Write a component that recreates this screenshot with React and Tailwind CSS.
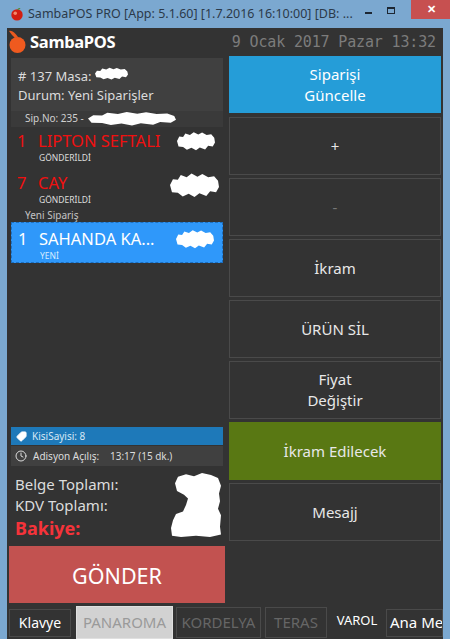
import { Clock, Tag } from 'lucide-react'

const font = { fontFamily: '"Noto Sans", sans-serif' }

// white scribbles covering numbers in the screenshot
const Blob = ({ className, d }) => (
  <svg className={`absolute ${className}`} viewBox="0 0 100 100" preserveAspectRatio="none">
    <path d={d} fill="#fff" />
  </svg>
)

const blobWide = 'M0 50 L6 28 L16 30 L22 12 L34 20 L44 6 L56 18 L66 8 L78 20 L90 16 L98 34 L100 58 L94 78 L82 74 L74 92 L60 82 L50 96 L38 84 L26 94 L16 80 L4 78Z'
const blobTall = 'M14 6 L30 2 L46 5 L62 0 L80 3 L94 8 L100 20 L96 32 L98 44 L94 56 L100 66 L98 84 L100 96 L78 100 L50 98 L20 100 L2 98 L0 86 L4 74 L10 64 L24 60 L30 50 L34 40 L26 34 L12 28 L8 16Z'

const actions = [
  { label: '+' },
  { label: '-', dim: true },
  { label: 'İkram' },
  { label: 'ÜRÜN SİL' },
  { label: 'Fiyat\nDeğiştir' },
]

const OrderRow = ({ qty, name, status, selected, blob }) => (
  <div className={`relative px-[6px] ${selected ? 'h-[41px] pt-[3px] bg-[#2f98fa] border border-dashed border-[#1c6fc0] text-white' : 'h-[42px] text-[#f01010]'}`}>
    <div className="flex items-center h-[27px] text-[16.5px] leading-none whitespace-nowrap">
      <span className="w-[21px]">{qty}</span>
      <span>{name}</span>
    </div>
    <div className={`-mt-[3px] pl-[22px] text-[8.5px] leading-[11px] ${selected ? 'text-[#d8ecff]' : 'text-[#dedede]'}`}>{status}</div>
    <Blob className={blob} d={blobWide} />
  </div>
)

export default function App() {
  return (
    <div style={font} className="w-[450px] h-[639px] overflow-hidden bg-[#7ba8d0] flex flex-col">
      {/* Title bar */}
      <div className="h-[28px] flex items-center shrink-0 text-[#2b3a4a] text-[12.5px] whitespace-nowrap">
        <svg className="ml-[10px] mr-[4px] w-[14px] h-[14px]" viewBox="0 0 16 16">
          <circle cx="8" cy="9" r="6.5" fill="#d21f12" />
          <circle cx="6" cy="7" r="2" fill="#f58a6a" />
          <path d="M8 3 C9 1 11 1 12 1 C11 3 10 3 8 3Z" fill="#4d8a2e" />
        </svg>
        <span>SambaPOS PRO [App: 5.1.60] [1.7.2016 16:10:00] [DB: ...</span>
        <div className="ml-auto flex items-start self-start h-[19px] mr-[-2px]">
          <div className="w-[7px] h-[2px] bg-[#1d2733] mt-[12px] mr-[15px]" />
          <div className="w-[8px] h-[7px] border border-t-2 border-[#1d2733] mt-[7px] mr-[16px]" />
          <div className="w-[40px] h-[19px] bg-[#c75050] text-white text-[11px] font-bold flex items-center justify-center mr-[1px]">✕</div>
        </div>
      </div>

      <div className="mx-[7px] flex-1 bg-[#333333] flex flex-col min-h-0">
        {/* Header */}
        <div className="h-[28px] shrink-0 flex items-center">
          <svg className="ml-[1px] w-[18px] h-[24px] -mt-[1px]" viewBox="0 0 18 24">
            <path d="M1 1 C4 0 7 3 10 7 L7 8 C5 6 3 4 1 1Z" fill="#ea5a20" />
            <circle cx="9.5" cy="15" r="8" fill="#ef5a1f" />
          </svg>
          <span className="ml-[4px] text-white font-bold text-[16.5px] tracking-[-0.3px]">SambaPOS</span>
          <span style={{ fontFamily: '"DejaVu Sans Mono", monospace' }} className="ml-auto mr-[7px] text-[#7c7c7c] text-[15px] tracking-[-0.15px] whitespace-nowrap">9 Ocak 2017 Pazar 13:32</span>
        </div>

        <div className="flex-1 flex min-h-0">
          {/* Left column */}
          <div className="w-[219px] shrink-0 pl-[2px] pr-[1px] flex flex-col">
            <div className="mx-[2px] h-[53px] mt-[2px] bg-[#404040] pl-[7px] pt-[9px] text-[#dcdcdc] text-[13px] leading-[19px] relative shrink-0">
              <div># 137 Masa:</div>
              <div>Durum: Yeni Siparişler</div>
              <Blob className="left-[84px] top-[9px] w-[33px] h-[13px]" d={blobWide} />
            </div>
            <div className="mx-[2px] h-[16px] bg-[#3a3a3a] pl-[14px] text-[#d0d0d0] text-[10px] leading-[15px] relative shrink-0">
              Sip.No: 235 -
              <Blob className="left-[77px] top-[0px] w-[88px] h-[15px]" d={blobWide} />
            </div>
            <div className="mx-[2px] mt-[1px] flex-1 min-h-0">
              <OrderRow qty="1" name="LIPTON SEFTALI" status="GÖNDERİLDİ" blob="left-[166px] top-[3px] w-[38px] h-[20px]" />
              <OrderRow qty="7" name="CAY" status="GÖNDERİLDİ" blob="left-[159px] top-[2px] w-[49px] h-[26px]" />
              <div className="h-[9px] pl-[14px] text-[#c4c4c4] text-[10px] leading-[9px] -mt-[1px] mb-[2px]">Yeni Sipariş</div>
              <OrderRow selected qty="1" name="SAHANDA KA..." status="YENİ" blob="left-[164px] top-[6px] w-[38px] h-[20px]" />
            </div>
            <div className="mx-[2px] h-[18px] mb-[1px] bg-[#1e79b9] flex items-center text-[#d6e8f5] text-[10px] shrink-0">
              <Tag size={11} fill="#fff" stroke="#fff" className="ml-[5px] mr-[5px] rotate-90" />
              KisiSayisi: 8
            </div>
            <div className="mx-[2px] h-[20px] bg-[#404040] flex items-center text-[#dcdcdc] text-[10px] shrink-0 whitespace-nowrap">
              <Clock size={12} className="ml-[4px] mr-[6px]" />
              <span className="w-[77px]">Adisyon Açılış:</span>
              <span>13:17 (15 dk.)</span>
            </div>
            <div className="relative h-[80px] pl-[6px] pt-[8px] text-[#dcdcdc] text-[15px] leading-[21px] shrink-0">
              <div>Belge Toplamı:</div>
              <div>KDV Toplamı:</div>
              <div className="text-[#f5333a] text-[18px] font-bold leading-[25px]">Bakiye:</div>
              <Blob className="left-[162px] top-[7px] w-[50px] h-[64px]" d={blobTall} />
            </div>
            <div className="h-[57px] pt-[3px] bg-[#c25250] text-white text-[21.5px] flex items-center justify-center shrink-0">GÖNDER</div>
          </div>

          {/* Right column */}
          <div className="flex-1 pl-[3px] pr-[2px] flex flex-col gap-[3px]">
            <button className="h-[57px] mb-[1px] bg-[#259dd8] text-white text-[15px] leading-[21px]">Siparişi<br />Güncelle</button>
            {actions.map(a => (
              <button key={a.label} className={`h-[58px] border border-[#4a4a4a] text-[15px] leading-[21px] whitespace-pre-line ${a.dim ? 'text-[#777]' : 'text-[#e8e8e8]'}`}>{a.label}</button>
            ))}
            <button className="h-[58px] bg-[#597813] text-[#e8e8e8] text-[15px]">İkram Edilecek</button>
            <button className="h-[58px] border border-[#4a4a4a] text-[#e8e8e8] text-[15px]">Mesajj</button>
          </div>
        </div>

        {/* Tabs */}
        <div className="h-[36px] shrink-0 flex items-center pl-[2px] text-[15px] whitespace-nowrap overflow-hidden">
          <div className="w-[62px] h-[28px] mt-[3px] border border-[#4a4a4a] text-white text-[14px] flex items-center justify-center">Klavye</div>
          <div className="w-[97px] h-[33px] mt-[3px] ml-[5px] bg-[#d2d2d2] border border-[#e0e0e0] text-[#9a9a9a] flex items-center justify-center">PANAROMA</div>
          <div className="w-[85px] h-[31px] mt-[3px] ml-[3px] border border-[#4a4a4a] text-[#666] flex items-center justify-center">KORDELYA</div>
          <div className="w-[62px] h-[31px] mt-[3px] ml-[4px] border border-[#4a4a4a] text-[#666] flex items-center justify-center">TERAS</div>
          <div className="w-[48px] ml-[6px] text-white text-[13px] text-center">VAROL</div>
          <div className="flex-1 min-w-0 overflow-hidden h-[28px] mt-[3px] ml-[5px] border border-[#4a4a4a] text-white flex items-center pl-[3px]">Ana Menü</div>
        </div>
      </div>
    </div>
  )
}
